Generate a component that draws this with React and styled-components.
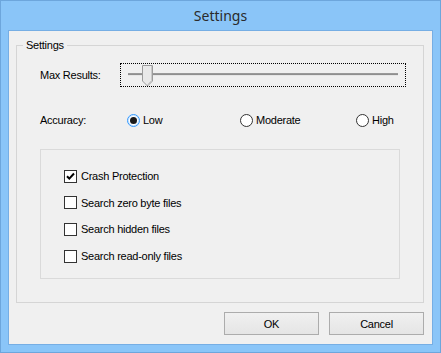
import React from "react";
import styled, { createGlobalStyle } from "styled-components";

const GlobalStyle = createGlobalStyle`
  html, body {
    margin: 0;
    padding: 0;
    background: #8ac5f8;
  }
  * {
    box-sizing: border-box;
  }
`;

const WindowFrame = styled.div`
  width: 441px;
  height: 353px;
  display: flex;
  flex-direction: column;
  background: #8ac5f8;
  border: 1px solid #6da6dc;
  padding: 0 7px 7px 7px;
  font-family: "Liberation Sans", Arial, sans-serif;
  font-size: 11px;
  letter-spacing: -0.25px;
  color: #000;
`;

const TitleBar = styled.div`
  height: 29px;
  display: flex;
  align-items: center;
  justify-content: center;
  font-family: "Noto Sans", "Open Sans", sans-serif;
  font-size: 14px;
  letter-spacing: 0;
  color: #2b2b2b;
  padding-bottom: 1px;
`;

const Client = styled.div`
  flex: 1;
  display: flex;
  flex-direction: column;
  background: #f0f0f0;
  border: 1px solid #76aee4;
  padding: 8px 8px 9px 7px;
`;

const GroupBox = styled.fieldset`
  flex: 1;
  margin: 0;
  padding: 0;
  min-width: 0;
  border: 1px solid #d5d5d5;
  display: flex;
  flex-direction: column;
`;

const Legend = styled.legend`
  margin-left: 6px;
  padding: 0 3px;
  line-height: 13px;
  height: 13px;
`;

const GroupBody = styled.div`
  display: flex;
  flex-direction: column;
  padding-left: 23px;
`;

const Row = styled.div`
  display: flex;
  align-items: center;
  height: 24px;
  margin-top: ${(p) => p.$top}px;
`;

const Label = styled.div`
  width: 80px;
  flex-shrink: 0;
`;

const SliderBox = styled.div`
  position: relative;
  width: 286px;
  height: 24px;
  border: 1px dotted #000;
`;

const Track = styled.div`
  position: absolute;
  left: 7px;
  right: 7px;
  top: 9px;
  height: 3px;
  background: #8f8f8f;
  border-bottom: 1px solid #e6e6e6;
  border-top: 1px solid #9a9a9a;
`;

const ThumbSvg = styled.svg`
  position: absolute;
  left: 21px;
  top: 1px;
`;

const RadioGroup = styled.div`
  display: grid;
  grid-template-columns: 113px 116px auto;
  padding-left: 7px;
`;

const Option = styled.label`
  display: flex;
  align-items: center;
  gap: 3px;
`;

const RadioCircle = styled.span`
  width: 13px;
  height: 13px;
  border-radius: 50%;
  background: #fff;
  border: 1px solid ${(p) => (p.$checked ? "#3399ff" : "#333")};
  box-shadow: ${(p) => (p.$checked ? "inset 0 0 0 1px #cfe6fd" : "none")};
  display: flex;
  align-items: center;
  justify-content: center;

  &::after {
    content: "";
    width: 7px;
    height: 7px;
    border-radius: 50%;
    background: ${(p) => (p.$checked ? "#1a1a1a" : "transparent")};
  }
`;

const OptionsPanel = styled.div`
  width: 360px;
  height: 130px;
  margin-top: 17px;
  border: 1px solid #dadada;
  padding: 18px 0 0 23px;
  display: flex;
  flex-direction: column;
  gap: 10.7px;
`;

const CheckRow = styled.label`
  display: flex;
  align-items: center;
  gap: 4px;
  height: 16px;
`;

const CheckBox = styled.span`
  width: 13px;
  height: 13px;
  background: #fff;
  border: 1px solid #333;
  display: flex;
  align-items: center;
  justify-content: center;
`;

const ButtonRow = styled.div`
  display: flex;
  justify-content: flex-end;
  gap: 10px;
  margin-top: 9px;
`;

const Button = styled.button`
  width: 95px;
  height: 23px;
  font-family: inherit;
  font-size: 11px;
  letter-spacing: inherit;
  color: #000;
  border: 1px solid #acacac;
  background: linear-gradient(#f0f0f0, #e5e5e5);
  padding: 0;
`;

const Check = ({ checked, children }) => (
  <CheckRow>
    <CheckBox>
      {checked && (
        <svg width="9" height="9" viewBox="0 0 9 9">
          <path d="M1 4.2 L3.3 6.6 L8 1.5" stroke="#000" strokeWidth="2" fill="none" />
        </svg>
      )}
    </CheckBox>
    {children}
  </CheckRow>
);

const Radio = ({ checked, children }) => (
  <Option>
    <RadioCircle $checked={checked} />
    {children}
  </Option>
);

export default function App() {
  return (
    <>
      <GlobalStyle />
      <WindowFrame>
        <TitleBar>Settings</TitleBar>
        <Client>
          <GroupBox>
            <Legend>Settings</Legend>
            <GroupBody>
              <Row $top={11}>
                <Label>Max Results:</Label>
                <SliderBox>
                  <Track />
                  <ThumbSvg width="11" height="22" viewBox="0 0 11 22">
                    <path
                      d="M0.5 0.5 H10.5 V16 L5.5 21 L0.5 16 Z"
                      fill="#e9e9e9"
                      stroke="#9c9c9c"
                    />
                    <path d="M9.5 1 V15.5 L5.5 19.6" stroke="#c9c9c9" fill="none" />
                  </ThumbSvg>
                </SliderBox>
              </Row>
              <Row $top={21}>
                <Label>Accuracy:</Label>
                <RadioGroup>
                  <Radio checked>Low</Radio>
                  <Radio>Moderate</Radio>
                  <Radio>High</Radio>
                </RadioGroup>
              </Row>
              <OptionsPanel>
                <Check checked>Crash Protection</Check>
                <Check>Search zero byte files</Check>
                <Check>Search hidden files</Check>
                <Check>Search read-only files</Check>
              </OptionsPanel>
            </GroupBody>
          </GroupBox>
          <ButtonRow>
            <Button>OK</Button>
            <Button>Cancel</Button>
          </ButtonRow>
        </Client>
      </WindowFrame>
    </>
  );
}
